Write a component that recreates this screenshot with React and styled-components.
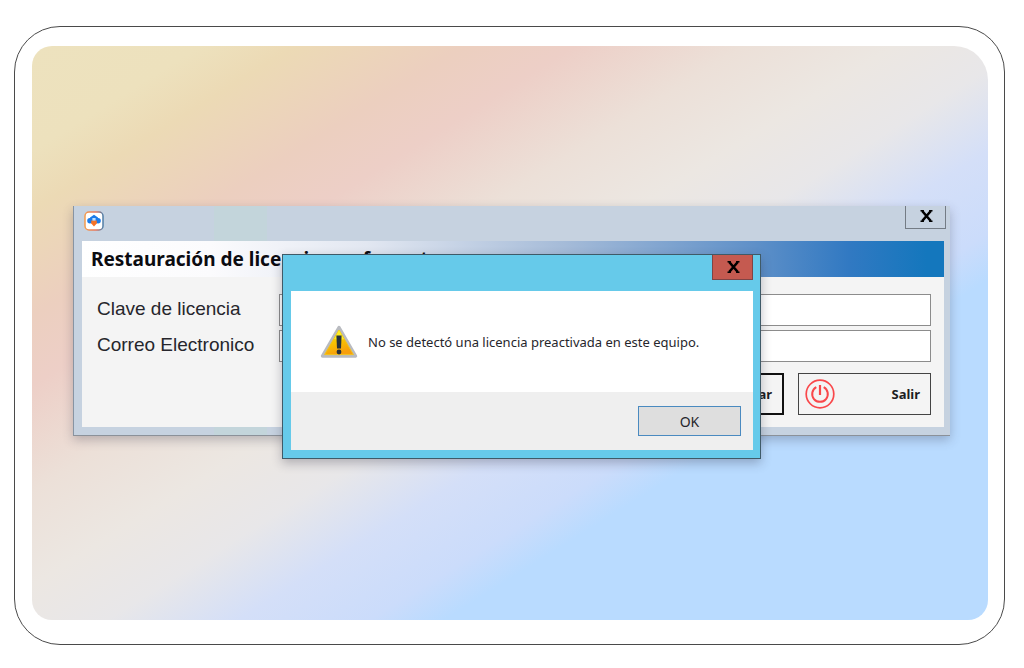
import React, { useState } from 'react';
import styled, { createGlobalStyle } from 'styled-components';

const AppIcon = () => (
    <svg width='20' height='20' viewBox='0 0 20 20' aria-hidden='true'>
        <defs>
            <linearGradient id='appEdge' x1='0' y1='0' x2='1' y2='0'>
                <stop offset='0' stopColor='#f49b4c' />
                <stop offset='0.6' stopColor='#e8755c' />
                <stop offset='1' stopColor='#4d7ea8' />
            </linearGradient>
        </defs>
        <rect x='1' y='1' width='18' height='18' rx='4' fill='#fff' stroke='url(#appEdge)' strokeWidth='1.5' />
        <circle cx='5.9' cy='9.8' r='2.7' fill='#1b7bea' />
        <circle cx='14.1' cy='9.8' r='2.7' fill='#1b7bea' />
        <path d='M6 6.6L10 3.8l4 2.8v3H6z' fill='#1b7bea' />
        <path d='M7.2 9.4h5.6v3L10 15.6l-2.8-3.2z' fill='#f57226' />
        <path d='M8.4 7h3.2v2.4H8.4z' fill='#bfe0ff' />
    </svg>
);

const WarningIcon = () => (
    <svg width='38' height='34' viewBox='0 0 38 34' aria-hidden='true'>
        <defs>
            <linearGradient id='warnFill' x1='0' y1='0' x2='0.4' y2='1'>
                <stop offset='0' stopColor='#fff200' />
                <stop offset='0.5' stopColor='#f8c800' />
                <stop offset='1' stopColor='#f79e0c' />
            </linearGradient>
        </defs>
        <path d='M19 2.5L35.5 31h-33z' fill='#b9bbc0' stroke='#b9bbc0' strokeWidth='3.4' strokeLinejoin='round' />
        <path d='M19 5L33.4 29.6H4.6z' fill='url(#warnFill)' stroke='#f3c21c' strokeWidth='1' strokeLinejoin='round' />
        <path d='M19 5L14 14c5 1 8 1 10 0z' fill='#ffee22' />
        <path d='M16.4 10.5h5.2L21 23.4h-4z' fill='#27313b' />
        <circle cx='19' cy='27' r='2.4' fill='#27313b' />
    </svg>
);

const PowerIcon = () => (
    <svg width='30' height='30' viewBox='0 0 30 30' fill='none' stroke='#f9484b' aria-hidden='true'>
        <circle cx='15' cy='15' r='13.8' strokeWidth='1.7' />
        <path d='M11.3 8.2a7.8 7.8 0 1 0 7.4 0' strokeWidth='2' />
        <path d='M15 6v10' strokeWidth='2.2' />
    </svg>
);

const CloseGlyph = () => (
    <svg width='13' height='12' viewBox='0 0 13 12' fill='none' stroke='#000' aria-hidden='true'>
        <path d='M2.2 1L10.8 11M10.8 1L2.2 11' strokeWidth='2.6' />
        <path d='M0.5 0.8h3.4M9.1 0.8h3.4M0.5 11.2h3.4M9.1 11.2h3.4' strokeWidth='1.4' />
    </svg>
);

const App = () => {
    const [dialogOpen, setDialogOpen] = useState(true);
    const closeDialog = () => setDialogOpen(false);

    return (
        <Page>
            <GlobalStyle />
            <Frame>
                <Backdrop>
                    <Window>
                        <TitleBar>
                            <AppIcon />
                            <WindowClose type='button' aria-label='Cerrar'><CloseGlyph /></WindowClose>
                        </TitleBar>
                        <Content>
                            <Header>Restauración de licencia por formato</Header>
                            <Form onSubmit={(event) => event.preventDefault()}>
                                <Field>
                                    <Label htmlFor='license'>Clave de licencia</Label>
                                    <Input id='license' type='text' />
                                </Field>
                                <Field>
                                    <Label htmlFor='email'>Correo Electronico</Label>
                                    <Input id='email' type='email' />
                                </Field>
                                <Actions>
                                    <ActionButton type='submit' $primary>Restaurar</ActionButton>
                                    <ActionButton type='button'>
                                        <PowerIcon />
                                        Salir
                                    </ActionButton>
                                </Actions>
                            </Form>
                        </Content>

                        {dialogOpen && (
                            <Dialog role='alertdialog' aria-describedby='message'>
                                <DialogBar>
                                    <DialogClose type='button' aria-label='Cerrar' onClick={closeDialog}><CloseGlyph /></DialogClose>
                                </DialogBar>
                                <DialogBody>
                                    <WarningIcon />
                                    <Message id='message'>No se detectó una licencia preactivada en este equipo.</Message>
                                </DialogBody>
                                <DialogFooter>
                                    <OkButton type='button' onClick={closeDialog}>OK</OkButton>
                                </DialogFooter>
                            </Dialog>
                        )}
                    </Window>
                </Backdrop>
            </Frame>
        </Page>
    );
};

export default App;

const GlobalStyle = createGlobalStyle`
    *, *::before, *::after {
        box-sizing: border-box;
    }

    body {
        margin: 0;
        background: #fff;
    }

    button, input {
        font: inherit;
        color: inherit;
        border-radius: 0;
        margin: 0;
    }
`;

const Page = styled.main`
    display: flex;
    min-height: 100vh;
    padding: 26px 19px 23px 14px;
    font-family: 'Noto Sans', 'Open Sans', sans-serif;
`;

const Frame = styled.div`
    display: flex;
    flex: 1;
    padding: 19px 16px 24px 17px;
    border: 1px solid #4a4a4a;
    border-radius: 46px;
`;

const Backdrop = styled.div`
    flex: 1;
    padding: 160px 38px 60px 41px;
    border-radius: 20px 34px 20px 20px;
    background: linear-gradient(148deg, #ede2be 0%, #ede1bd 9%, #ecdab5 14%, #eccfbf 23%, #edcfc7 29%, #ece0d8 38%, #ece7e2 46%, #e8e7e9 53%, #d4dff8 60%, #cbdcfb 67%, #b9dbff 71%);
`;

const Window = styled.section`
    position: relative;
    padding: 0 6px 8px 8px;
    border-left: 1px solid #8794a3;
    border-bottom: 1px solid #8b9199;
    background: linear-gradient(90deg, #c6d2e0 16%, #c3d5db 16%, #c3d5db 22%, #c6d2e0 22%);
    box-shadow: 0 4px 10px rgba(60, 60, 80, 0.3);
`;

const TitleBar = styled.div`
    display: flex;
    align-items: flex-start;
    justify-content: space-between;
    height: 35px;
    padding-left: 2px;

    > svg {
        margin-top: 5px;
    }
`;

const WindowClose = styled.button`
    display: flex;
    align-items: center;
    justify-content: center;
    width: 41px;
    height: 23px;
    margin-right: -2px;
    padding: 0 0 3px 2px;
    border: 1px solid #747c85;
    border-top: 0;
    background: transparent;
`;

const Content = styled.div`
    background: #f4f4f4;
`;

const Header = styled.h1`
    height: 36px;
    margin: 0;
    padding: 0 9px;
    background: linear-gradient(90deg, #fff 0%, #fbfbfd 15%, #e2e7f1 33%, #a5bbd8 56%, #5f90c8 78%, #3179c2 89%, #1477bd 98%);
    color: #0b0b10;
    font-size: 19px;
    line-height: 36px;
    white-space: nowrap;
`;

const Form = styled.form`
    display: flex;
    flex-direction: column;
    gap: 4px;
    padding: 17px 13px 12px 15px;
`;

const Field = styled.div`
    display: flex;
    align-items: flex-start;
`;

const Label = styled.label`
    width: 182px;
    color: #26262c;
    font-family: 'Liberation Sans', Arial, sans-serif;
    font-size: 19px;
    line-height: 30px;
`;

const Input = styled.input`
    flex: 1;
    min-width: 0;
    height: 32px;
    padding: 0 6px;
    border: 1px solid #8c8c8c;
    background: #fff;
`;

const Actions = styled.div`
    display: flex;
    justify-content: flex-end;
    gap: 14px;
    margin-top: 7px;
`;

const ActionButton = styled.button`
    display: flex;
    align-items: center;
    justify-content: ${({ $primary }) => ($primary ? 'flex-end' : 'space-between')};
    width: 133px;
    height: 42px;
    padding: 0 10px 0 6px;
    border: ${({ $primary }) => ($primary ? '2px solid #111' : '1px solid #444')};
    background: #f4f4f4;
    color: #1d1d22;
    font-size: 13px;
    font-weight: 700;
`;

const Dialog = styled.div`
    position: absolute;
    top: 48px;
    left: 208px;
    right: 189px;
    padding: 0 7px 8px 8px;
    border: 1px solid #3f5a68;
    background: #66caea;
    box-shadow: 0 4px 10px rgba(40, 40, 60, 0.3);
`;

const DialogBar = styled.div`
    display: flex;
    align-items: flex-start;
    justify-content: flex-end;
    height: 36px;
`;

const DialogClose = styled.button`
    display: flex;
    align-items: center;
    justify-content: center;
    width: 41px;
    height: 25px;
    padding: 0 0 0 2px;
    border: 1px solid #7f4445;
    border-top: 0;
    background: #c55a50;
`;

const DialogBody = styled.div`
    display: flex;
    align-items: center;
    gap: 10px;
    height: 101px;
    padding: 0 20px 0 29px;
    background: #fff;
`;

const Message = styled.p`
    margin: 0;
    color: #26262c;
    font-size: 13px;
    line-height: 20px;
`;

const DialogFooter = styled.div`
    display: flex;
    justify-content: flex-end;
    padding: 14px 12px 14px;
    background: #efefef;
`;

const OkButton = styled.button`
    width: 103px;
    height: 30px;
    padding: 0;
    border: 1px solid #4a8ac0;
    background: #dedede;
    color: #26262c;
    font-size: 14px;
`;
